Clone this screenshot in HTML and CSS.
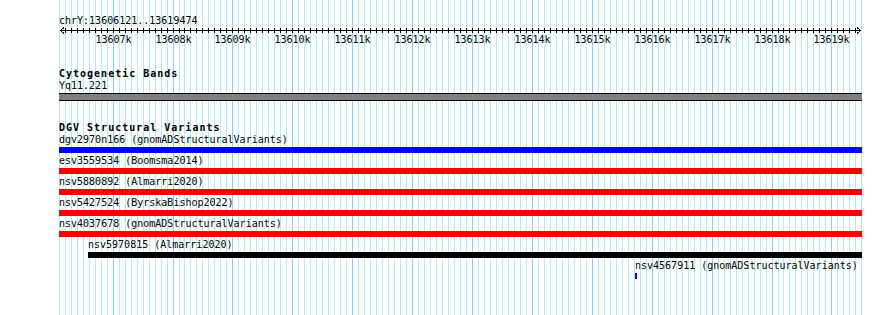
FILE: index.html
```html
<!DOCTYPE html>
<html lang="en">
  <head>
    <meta charset="UTF-8" />
    <title>chrY:13606121..13619474</title>
    <link rel="stylesheet" href="styles.css">
  </head>
  <body>
    <div class="view">
      <div class="panel">
        <div class="ruler">
          <div class="locus">chrY:13606121..13619474</div>
          <div class="scale">
            <svg width="803" height="7" viewBox="0 0 803 7">
              <path d="M1 3.5H802" />
              <polyline points="5,0.5 1.5,3.5 5,6.5" />
              <polyline points="798,0.5 801.5,3.5 798,6.5" />
            </svg>
          </div>
          <div class="scale-labels">
            <span style="left: 54.5px">13607k</span>
            <span style="left: 114.5px">13608k</span>
            <span style="left: 173.5px">13609k</span>
            <span style="left: 233.5px">13610k</span>
            <span style="left: 293.5px">13611k</span>
            <span style="left: 353.5px">13612k</span>
            <span style="left: 413.5px">13613k</span>
            <span style="left: 473.5px">13614k</span>
            <span style="left: 533.5px">13615k</span>
            <span style="left: 593.5px">13616k</span>
            <span style="left: 653.5px">13617k</span>
            <span style="left: 713.5px">13618k</span>
            <span style="left: 772.5px">13619k</span>
          </div>
        </div>

        <section class="track bands">
          <h2 class="track-title">Cytogenetic Bands</h2>
          <div class="band-row">
            <div class="feature-label">Yq11.221</div>
            <div class="band"></div>
          </div>
        </section>

        <section class="track variants">
          <h2 class="track-title">DGV Structural Variants</h2>
          <div class="feature-row">
            <div class="feature-label">dgv2970n166 (gnomADStructuralVariants)</div>
            <div class="bar blue" style="width: 803px"></div>
          </div>
          <div class="feature-row">
            <div class="feature-label">esv3559534 (Boomsma2014)</div>
            <div class="bar red" style="width: 803px"></div>
          </div>
          <div class="feature-row">
            <div class="feature-label">nsv5880892 (Almarri2020)</div>
            <div class="bar red" style="width: 803px"></div>
          </div>
          <div class="feature-row">
            <div class="feature-label">nsv5427524 (ByrskaBishop2022)</div>
            <div class="bar red" style="width: 803px"></div>
          </div>
          <div class="feature-row">
            <div class="feature-label">nsv4037678 (gnomADStructuralVariants)</div>
            <div class="bar red" style="width: 803px"></div>
          </div>
          <div class="feature-row">
            <div class="feature-label" style="margin-left: 29px">nsv5970815 (Almarri2020)</div>
            <div class="bar black" style="margin-left: 29px; width: 774px"></div>
          </div>
          <div class="feature-row">
            <div class="feature-label" style="margin-left: 576px">nsv4567911 (gnomADStructuralVariants)</div>
            <div class="bar blue" style="margin-left: 576px; width: 2px"></div>
          </div>
        </section>
      </div>
    </div>
  </body>
</html>
```
FILE: styles.css
```css
body {
  margin: 0;
  background: #ffffff;
  color: #000000;
  font-family: "DejaVu Sans Mono", monospace;
  font-size: 10px;
  line-height: 12px;
}
.view {
  width: 890px;
  height: 315px;
  overflow: hidden;
}

/* 100bp grid is 5.99px, so the 6px stripes slip one pixel left at 125 and 724 */
.panel {
  margin-left: 59px;
  width: 803px;
  height: 315px;
  padding-top: 15px;
  box-sizing: border-box;
  background-image:
    repeating-linear-gradient(90deg, #87cefa 0 1px, transparent 1px 60px),
    repeating-linear-gradient(90deg, #87cefa 0 1px, transparent 1px 60px),
    linear-gradient(#87cefa, #87cefa),
    repeating-linear-gradient(90deg, #afeeee 0 1px, transparent 1px 6px),
    repeating-linear-gradient(90deg, #afeeee 0 1px, transparent 1px 6px),
    repeating-linear-gradient(90deg, #afeeee 0 1px, transparent 1px 6px);
  background-position: 54px 0, 173px 0, 772px 0, 0 0, 125px 0, 724px 0;
  background-size: 61px 100%, 541px 100%, 1px 100%, 121px 100%, 595px 100%, 79px 100%;
  background-repeat: no-repeat;
}
.locus {
  white-space: nowrap;
}
.scale {
  height: 7px;
  background-image:
    repeating-linear-gradient(90deg, #000 0 1px, transparent 1px 6px),
    repeating-linear-gradient(90deg, #000 0 1px, transparent 1px 6px),
    repeating-linear-gradient(90deg, #000 0 1px, transparent 1px 6px);
  background-position: 6px 1px, 125px 1px, 724px 1px;
  background-size: 115px 5px, 595px 5px, 73px 5px;
  background-repeat: no-repeat;
  svg {
    display: block;
    shape-rendering: crispEdges;
  }
  path,
  polyline {
    fill: none;
    stroke: #000000;
    stroke-width: 1;
  }
}
.scale-labels {
  position: relative;
  height: 12px;
  span {
    position: absolute;
    top: 0;
    transform: translateX(-50%);
    white-space: nowrap;
  }
}
.track-title {
  margin: 0;
  font-size: 10px;
  line-height: 12px;
  font-weight: bold;
  letter-spacing: 1px;
  white-space: nowrap;
}
.bands {
  margin-top: 22px;
}
.variants {
  margin-top: 21px;
}
.feature-label {
  white-space: nowrap;
  height: 12px;
}
.band {
  margin-top: 1px;
  height: 6px;
  background: #808080;
  border-top: 1px solid #000000;
  border-bottom: 1px solid #000000;
}
.feature-row {
  padding-bottom: 2px;
}
.bar {
  margin-top: 1px;
  height: 6px;
}
.blue {
  background: #0000ff;
}
.red {
  background: #ff0000;
}
.black {
  background: #000000;
}
```
